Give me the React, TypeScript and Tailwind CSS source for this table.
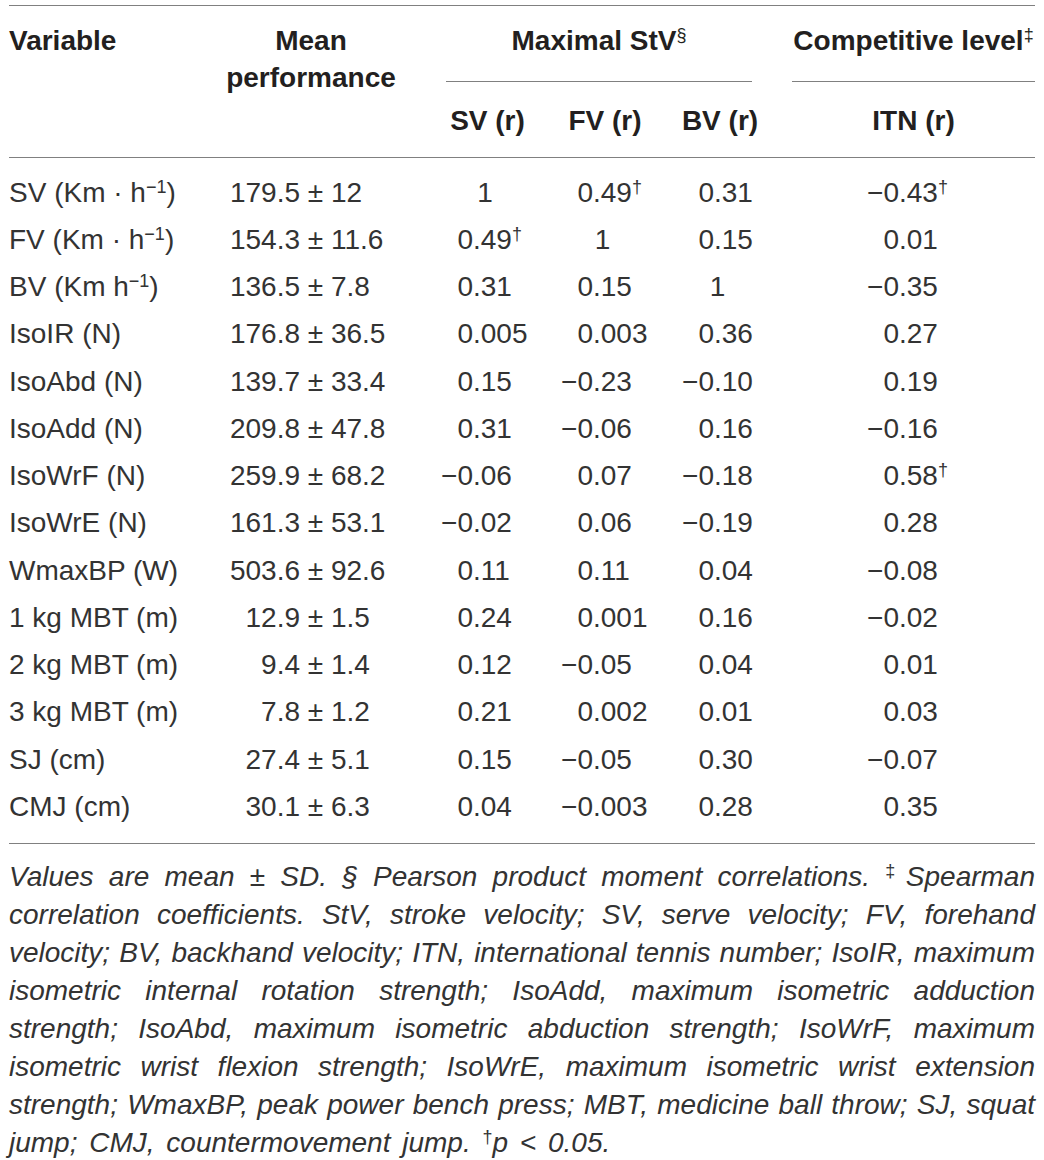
import React from 'react';

type Row = {
  name: React.ReactNode;
  mean: string;
  sv: string;
  fv: string;
  bv: string;
  itn: string;
};

const Sup: React.FC<{ children: React.ReactNode; className?: string }> = ({ children, className = '' }) => (
  <sup className={`text-[18px] leading-none relative top-[-9px] ${className}`}>{children}</sup>
);

const unitKmh = (prefix: string, dot: boolean) => (
  <>
    {prefix} (Km{dot ? ' · ' : ' '}h<Sup>−1</Sup>)
  </>
);

const rows: Row[] = [
  { name: unitKmh('SV', true), mean: '179.5 ± 12', sv: '1', fv: '0.49†', bv: '0.31', itn: '−0.43†' },
  { name: unitKmh('FV', true), mean: '154.3 ± 11.6', sv: '0.49†', fv: '1', bv: '0.15', itn: '0.01' },
  { name: unitKmh('BV', false), mean: '136.5 ± 7.8', sv: '0.31', fv: '0.15', bv: '1', itn: '−0.35' },
  { name: 'IsoIR (N)', mean: '176.8 ± 36.5', sv: '0.005', fv: '0.003', bv: '0.36', itn: '0.27' },
  { name: 'IsoAbd (N)', mean: '139.7 ± 33.4', sv: '0.15', fv: '−0.23', bv: '−0.10', itn: '0.19' },
  { name: 'IsoAdd (N)', mean: '209.8 ± 47.8', sv: '0.31', fv: '−0.06', bv: '0.16', itn: '−0.16' },
  { name: 'IsoWrF (N)', mean: '259.9 ± 68.2', sv: '−0.06', fv: '0.07', bv: '−0.18', itn: '0.58†' },
  { name: 'IsoWrE (N)', mean: '161.3 ± 53.1', sv: '−0.02', fv: '0.06', bv: '−0.19', itn: '0.28' },
  { name: 'WmaxBP (W)', mean: '503.6 ± 92.6', sv: '0.11', fv: '0.11', bv: '0.04', itn: '−0.08' },
  { name: '1 kg MBT (m)', mean: '12.9 ± 1.5', sv: '0.24', fv: '0.001', bv: '0.16', itn: '−0.02' },
  { name: '2 kg MBT (m)', mean: '9.4 ± 1.4', sv: '0.12', fv: '−0.05', bv: '0.04', itn: '0.01' },
  { name: '3 kg MBT (m)', mean: '7.8 ± 1.2', sv: '0.21', fv: '0.002', bv: '0.01', itn: '0.03' },
  { name: 'SJ (cm)', mean: '27.4 ± 5.1', sv: '0.15', fv: '−0.05', bv: '0.30', itn: '−0.07' },
  { name: 'CMJ (cm)', mean: '30.1 ± 6.3', sv: '0.04', fv: '−0.003', bv: '0.28', itn: '0.35' },
];

// decimal aligned number: integer part right aligned in a fixed box
const Num: React.FC<{ value: string; lead: string }> = ({ value, lead }) => {
  const dagger = value.endsWith('†');
  const v = dagger ? value.slice(0, -1) : value;
  if (!v.includes('.')) {
    return (
      <div className="text-center pr-[5px]">
        {v}
        {dagger && <Sup>†</Sup>}
      </div>
    );
  }
  const i = v.indexOf('.');
  return (
    <div className="flex">
      <span className={`${lead} text-right shrink-0`}>{v.slice(0, i)}</span>
      <span className="whitespace-nowrap">
        {v.slice(i)}
        {dagger && <Sup>†</Sup>}
      </span>
    </div>
  );
};

const Mean: React.FC<{ value: string }> = ({ value }) => {
  const [a, b] = value.split(' ± ');
  return (
    <div className="flex">
      <span className="w-[85px] text-right shrink-0">{a}</span>
      <span className="whitespace-nowrap">&nbsp;± {b}</span>
    </div>
  );
};

const footLines: React.ReactNode[] = [
  <>
    Values are mean ± SD. § Pearson product moment correlations.{' '}
    <Sup className="not-italic">‡</Sup>Spearman
  </>,
  'correlation coefficients. StV, stroke velocity; SV, serve velocity; FV, forehand',
  'velocity; BV, backhand velocity; ITN, international tennis number; IsoIR, maximum',
  'isometric internal rotation strength; IsoAdd, maximum isometric adduction',
  'strength; IsoAbd, maximum isometric abduction strength; IsoWrF, maximum',
  'isometric wrist flexion strength; IsoWrE, maximum isometric wrist extension',
  'strength; WmaxBP, peak power bench press; MBT, medicine ball throw; SJ, squat',
];

export default function App() {
  return (
    <div className="w-[1044px] h-[1160px] bg-white font-['Liberation_Sans',Arial,sans-serif] text-[#333] pt-[5px] overflow-hidden">
      <div className="ml-[9px] w-[1026px]">
        {/* table */}
        <div className="border-t border-b border-[#808080]">
          {/* header */}
          <div className="flex h-[152px] border-b border-[#808080] font-bold text-[28px] leading-[33px] text-[#231f20]">
            <div className="w-[206px] pt-[18px]">Variable</div>
            <div className="w-[215px] pt-[16px] pr-[23px] text-center leading-[37px]">
              Mean
              <br />
              performance
            </div>
            <div className="w-[345px] pt-[18px] flex flex-col">
              <div className="ml-[16px] mr-[23px] text-center">
                Maximal StV<Sup className="font-normal">§</Sup>
              </div>
              <div className="ml-[16px] mr-[23px] mt-[24px] h-px bg-[#808080]" />
              <div className="flex mt-[22px]">
                <div className="w-[115px] text-center">SV (r)</div>
                <div className="w-[120px] text-center">FV (r)</div>
                <div className="w-[110px] text-center">BV (r)</div>
              </div>
            </div>
            <div className="w-[17px]" />
            <div className="w-[243px] pt-[18px] flex flex-col">
              <div className="text-center whitespace-nowrap">
                Competitive level<Sup className="font-normal">‡</Sup>
              </div>
              <div className="mt-[24px] h-px bg-[#808080]" />
              <div className="mt-[22px] text-center">ITN (r)</div>
            </div>
          </div>

          {/* body */}
          <div className="pt-[11px] pb-[12px] text-[28px]">
            {rows.map((r, idx) => (
              <div key={idx} className="flex items-center h-[47.25px] whitespace-nowrap">
                <div className="w-[206px]">{r.name}</div>
                <div className="w-[215px]">
                  <Mean value={r.mean} />
                </div>
                <div className="w-[115px]">
                  <Num value={r.sv} lead="w-[43px]" />
                </div>
                <div className="w-[120px]">
                  <Num value={r.fv} lead="w-[48px]" />
                </div>
                <div className="w-[110px]">
                  <Num value={r.bv} lead="w-[49px]" />
                </div>
                <div className="w-[17px]" />
                <div className="w-[243px]">
                  <Num value={r.itn} lead="w-[107px]" />
                </div>
              </div>
            ))}
          </div>
        </div>

        {/* footnote */}
        <div className="pt-[14px] italic text-[28px] leading-[38px]">
          {footLines.map((l, i) => (
            <div key={i} className="text-justify [text-align-last:justify] [word-spacing:-3px]">
              {l}
            </div>
          ))}
          <div className="[word-spacing:4px]">
            jump; CMJ, countermovement jump. <Sup className="not-italic">†</Sup>p &lt; 0.05.
          </div>
        </div>
      </div>
    </div>
  );
}
